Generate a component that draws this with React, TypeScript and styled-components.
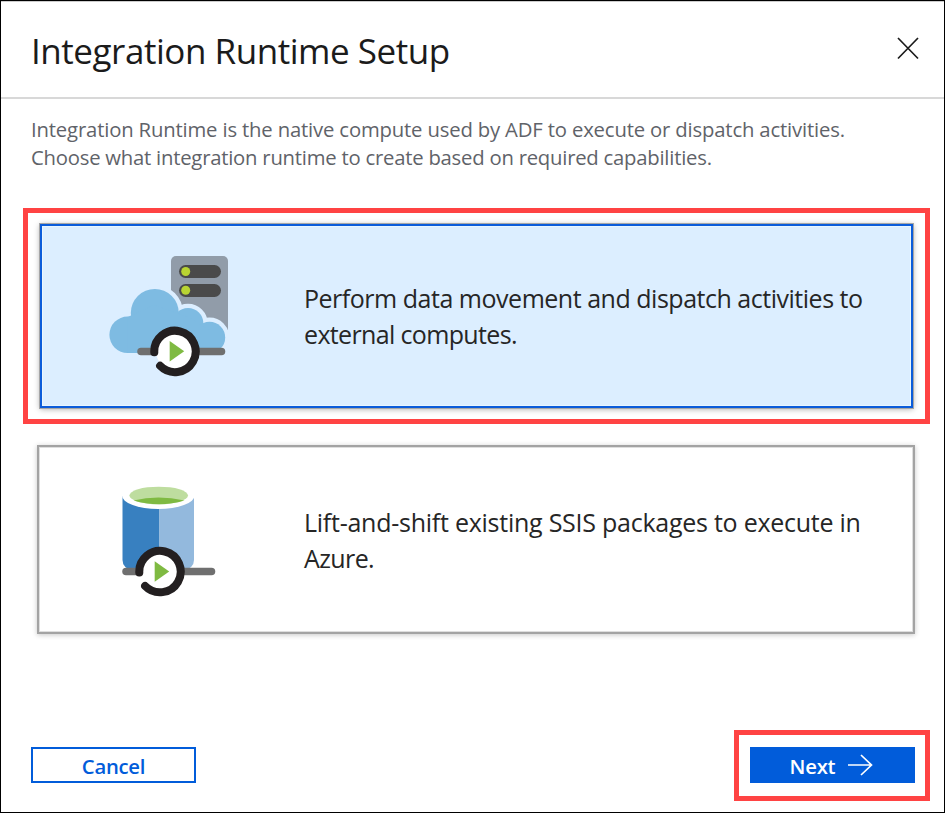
import React from "react";
import styled, { createGlobalStyle } from "styled-components";

const GlobalStyle = createGlobalStyle`
  *, *::before, *::after { box-sizing: border-box; }
  body { margin: 0; background: #fff; }
`;

const Dialog = styled.main`
  display: flex;
  flex-direction: column;
  width: 945px;
  height: 813px;
  border: 1px solid #000;
  background: #fff;
  overflow: hidden;
  font-family: "Open Sans", "Noto Sans", sans-serif;
`;

const Header = styled.header`
  display: flex;
  justify-content: space-between;
  flex: none;
  height: 98px;
  padding: 25px 24px 0 30px;
  border-top: 1px solid #ccc;
  border-bottom: 2px solid #d8d8d8;
`;

const Line = styled.span<{ $spacing: number }>`
  display: block;
  white-space: nowrap;
  letter-spacing: ${(p) => p.$spacing}px;
`;

const Title = styled.h1`
  margin: 0;
  font-size: 35px;
  font-weight: 400;
  line-height: 48px;
  color: #1b1b1b;
`;

const CloseButton = styled.button`
  display: flex;
  width: 24px;
  height: 24px;
  margin-top: 9px;
  padding: 0;
  border: 0;
  background: none;
`;

const Intro = styled.p`
  flex: none;
  margin: 16px 0 0 30px;
  font-size: 20.3px;
  line-height: 28px;
  color: #5f6369;
`;

const Highlight = styled.div`
  border: 5px solid #ff4343;
`;

const CardHighlight = styled(Highlight)`
  flex: none;
  width: 907px;
  height: 216px;
  margin: 37px 0 0 22px;
  padding: 11px 12px;
`;

const Card = styled.section<{ $selected?: boolean }>`
  display: flex;
  align-items: center;
  flex: none;
  width: ${(p) => (p.$selected ? 873 : 878)}px;
  height: ${(p) => (p.$selected ? 184 : 189)}px;
  margin: ${(p) => (p.$selected ? "0" : "21px 0 0 36px")};
  border: 2px solid ${(p) => (p.$selected ? "#0b5cda" : "#a3a3a3")};
  background: ${(p) => (p.$selected ? "#dceeff" : "#fff")};
  box-shadow: ${(p) =>
    p.$selected
      ? "0 0 0 1px #a6a6a6, 0 1px 6px rgba(0,0,0,.35), inset 0 0 0 1px #e9f6ff"
      : "0 1px 5px rgba(0,0,0,.22), inset 0 0 0 1px #dedede"};
`;

const Art = styled.div<{ $left: number; $width: number; $shift: number }>`
  flex: none;
  width: ${(p) => p.$width}px;
  margin-left: ${(p) => p.$left}px;
  padding-top: ${(p) => p.$shift}px;
  svg { display: block; }
`;

const CardText = styled.p`
  margin: 0;
  font-size: 25px;
  line-height: 36px;
  color: #262626;
`;

const Footer = styled.footer`
  display: flex;
  justify-content: space-between;
  align-items: flex-start;
  flex: none;
  height: 71px;
  margin: 96px 14px 0 30px;
`;

const Button = styled.button<{ $primary?: boolean }>`
  display: flex;
  align-items: center;
  justify-content: center;
  gap: 13px;
  width: 165px;
  height: 36px;
  margin-top: ${(p) => (p.$primary ? 0 : 17)}px;
  padding: ${(p) => (p.$primary ? "1px 2px 0 0" : "1px 0 0")};
  border: 2px solid #015cda;
  background: ${(p) => (p.$primary ? "#015cda" : "#fff")};
  color: ${(p) => (p.$primary ? "#fff" : "#015cda")};
  font: 600 20.3px/28px "Open Sans", "Noto Sans", sans-serif;
  letter-spacing: -0.25px;
  svg { display: block; margin-top: -2px; }
`;

const ButtonHighlight = styled(Highlight)`
  width: 196px;
  height: 71px;
  padding: 12px 10px 0 11px;
`;

const PlayRing = ({ x, y }: { x: number; y: number }) => (
  <g transform={`translate(${x} ${y})`}>
    <circle r="19" fill="#fff" />
    <path d="M-20.7 1A20.7 20.7 0 1 1-14.9 14.5" fill="none" stroke="#231f20" strokeWidth="8" strokeLinecap="round" />
    <path d="M-5.3-10.2 9.2 0-5.3 10.3Z" fill="#7fba42" />
  </g>
);

const CloudShape = () => (
  <>
    <circle cx="18.700" cy="79.800" r="18.300" />
    <circle cx="45.800" cy="58" r="24" />
    <circle cx="79" cy="68.500" r="15.400" />
    <circle cx="100.500" cy="82.500" r="15.700" />
    <path d="M18.700 98.100V62L45 50 79 62 100.500 75V98.200Z" />
  </>
);

const CloudServerIcon = () => (
  <svg width="120" height="122" viewBox="0 0 120 122">
    <path d="M62 6a5 5 0 0 1 5-5h47a5 5 0 0 1 5 5v69H62Z" fill="#919ca9" />
    <rect x="70" y="10" width="42" height="13" rx="6.5" fill="#4a4a4a" />
    <rect x="70" y="29" width="42" height="13" rx="6.5" fill="#4a4a4a" />
    <circle cx="76.7" cy="16.5" r="4.5" fill="#b8d432" />
    <circle cx="76.7" cy="35.3" r="4.5" fill="#b8d432" />
    <g fill="#dceeff" stroke="#dceeff" strokeWidth="8.500"><CloudShape /></g>
    <g fill="#7ebbe2"><CloudShape /></g>
    <path d="M32 96.500H112.500" stroke="#6f6f6f" strokeWidth="7.500" strokeLinecap="round" />
    <PlayRing x={66} y={96.3} />
  </svg>
);

const DatabaseIcon = () => (
  <svg width="96" height="112" viewBox="0 0 96 112">
    <path d="M1.500 11V75Q1.500 83 12 86H38.500V11Z" fill="#3880c0" />
    <path d="M38.500 11V86H62Q73 83 73 75V11Z" fill="#93b9dd" />
    <ellipse cx="37.300" cy="10.500" rx="36.300" ry="13.500" fill="#fff" />
    <ellipse cx="37.700" cy="10.500" rx="29.300" ry="8.800" fill="#bedd9f" />
    <path d="M12.500 15.500Q37 9.500 63.500 15.500Q38 23 12.500 15.500Z" fill="#7fba42" />
    <path d="M5 86.500H90.500" stroke="#6f6f6f" strokeWidth="7.500" strokeLinecap="round" />
    <PlayRing x={39} y={86.5} />
  </svg>
);

export default function App() {
  return (
    <>
      <GlobalStyle />
      <Dialog>
        <Header>
          <Title><Line $spacing={-0.46}>Integration Runtime Setup</Line></Title>
          <CloseButton aria-label="Close">
            <svg width="24" height="24" viewBox="0 0 24 24">
              <path d="M2 2 22 22.500M22 2 2 22.500" stroke="#1b1b1b" strokeWidth="1.700" />
            </svg>
          </CloseButton>
        </Header>
        <Intro>
          <Line $spacing={-0.165}>Integration Runtime is the native compute used by ADF to execute or dispatch activities.</Line>
          <Line $spacing={-0.23}>Choose what integration runtime to create based on required capabilities.</Line>
        </Intro>
        <CardHighlight>
          <Card $selected>
            <Art $left={67} $width={195} $shift={0}><CloudServerIcon /></Art>
            <CardText>
              <Line $spacing={-0.48}>Perform data movement and dispatch activities to</Line>
              <Line $spacing={-0.65}>external computes.</Line>
            </CardText>
          </Card>
        </CardHighlight>
        <Card>
          <Art $left={82} $width={183} $shift={2}><DatabaseIcon /></Art>
          <CardText>
            <Line $spacing={-0.25}>Lift-and-shift existing SSIS packages to execute in</Line>
            <Line $spacing={-0.6}>Azure.</Line>
          </CardText>
        </Card>
        <Footer>
          <Button>Cancel</Button>
          <ButtonHighlight>
            <Button $primary>
              Next
              <svg width="25" height="22" viewBox="0 0 25 22">
                <path d="M0 11H24M13 1 23.500 11 13 21" fill="none" stroke="#fff" strokeWidth="1.700" />
              </svg>
            </Button>
          </ButtonHighlight>
        </Footer>
      </Dialog>
    </>
  );
}
